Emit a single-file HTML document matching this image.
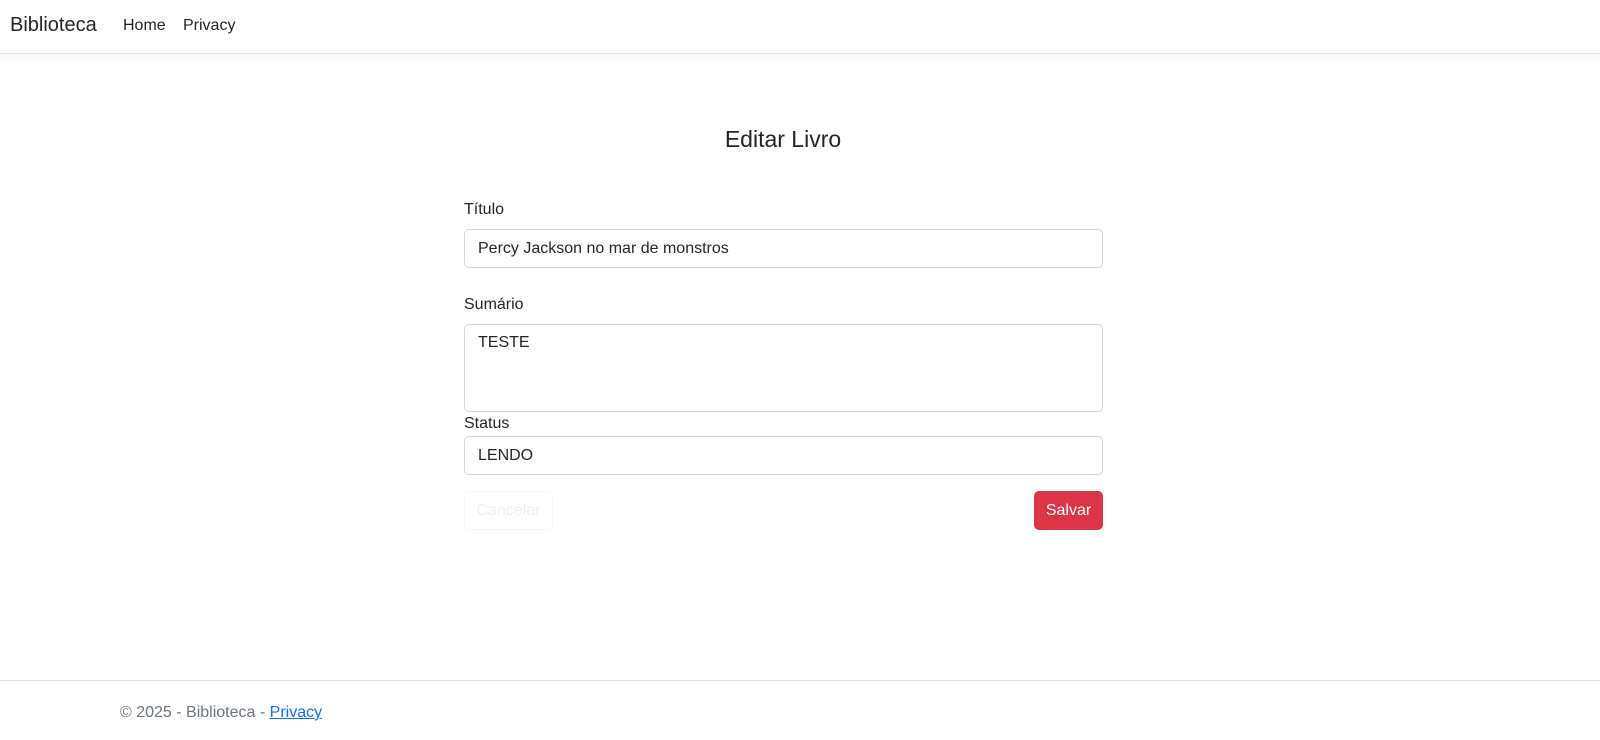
<!DOCTYPE html>
<html><head><meta charset="utf-8"><style>
*{box-sizing:border-box}
body{margin:0;width:1600px;height:740px;overflow:hidden;font-family:"Liberation Sans",sans-serif;color:#212529;background:#fff;position:relative}
.nav{height:54px;border-bottom:1px solid #dee2e6;box-shadow:0 4px 10px rgba(0,0,0,.05);position:relative}
.brand{position:absolute;left:10px;top:14px;font-size:20px}
.nl{position:absolute;top:17px;font-size:16px}
h1{position:absolute;left:0;width:1566px;text-align:center;top:126px;margin:0;font-weight:400;font-size:23px}
.lbl{position:absolute;left:464px;font-size:16px}
.in{position:absolute;left:464px;width:639px;border:1px solid #ced4da;border-radius:5px;padding:0 13px;font-size:16px}
.btn{position:absolute;border-radius:5px;font-size:16px}
.foot{position:absolute;top:680px;left:0;right:0;border-top:1px solid #dee2e6}
.ft{position:absolute;top:704px;left:120px;font-size:16px;color:#6c757d}
</style></head><body>
<div class="nav"><span class="brand">Biblioteca</span><span class="nl" style="left:123px">Home</span><span class="nl" style="left:183px">Privacy</span></div>
<h1>Editar Livro</h1>
<div class="lbl" style="top:201px">Título</div>
<div class="in" style="top:229px;height:39px;line-height:37px">Percy Jackson no mar de monstros</div>
<div class="lbl" style="top:296px">Sumário</div>
<div class="in" style="top:324px;height:88px;padding-top:9px">TESTE</div>
<div class="lbl" style="top:415px">Status</div>
<div class="in" style="top:436px;height:39px;line-height:37px">LENDO</div>
<div class="btn" style="left:464px;top:491px;width:89px;height:39px;border:1px solid #f6f6f6;color:#f0f0f0;line-height:37px;text-align:center">Cancelar</div>
<div class="btn" style="left:1034px;top:491px;width:69px;height:39px;background:#dc3545;color:#fff;line-height:39px;text-align:center">Salvar</div>
<div class="foot"></div>
<div class="ft">© 2025 - Biblioteca - <span style="color:#0d6efd;text-decoration:underline">Privacy</span></div>
</body></html>
